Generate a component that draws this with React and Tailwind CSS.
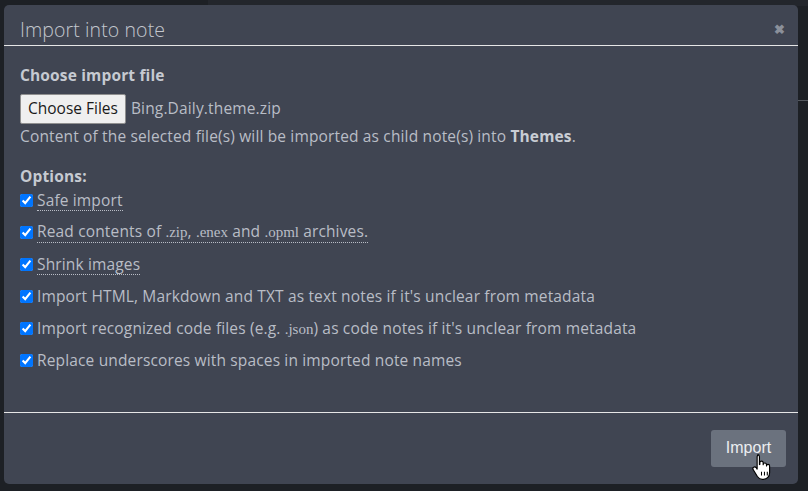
import React from "react";

const code = "font-['Liberation_Serif',serif] text-[15px] tracking-normal";

const options = [
  { label: "Safe import", tip: true },
  {
    label: (
      <>
        Read contents of <code className={code}>.zip</code>,{" "}
        <code className={code}>.enex</code> and{" "}
        <code className={code}>.opml</code> archives.
      </>
    ),
    tip: true,
  },
  { label: "Shrink images", tip: true },
  { label: "Import HTML, Markdown and TXT as text notes if it's unclear from metadata" },
  {
    label: (
      <>
        Import recognized code files (e.g. <code className={code}>.json</code>) as
        code notes if it's unclear from metadata
      </>
    ),
  },
  { label: "Replace underscores with spaces in imported note names" },
];

function HandCursor() {
  return (
    <svg
      className="absolute left-[40px] top-[23px]"
      width="21"
      height="27"
      viewBox="0 0 16 21"
    >
      <path
        d="M5 1.5c.8 0 1.4.6 1.4 1.4V9l.3-.1V7.6c0-.8.6-1.3 1.3-1.3s1.3.6 1.3 1.3v1.5c0-.8.6-1.3 1.3-1.3s1.3.6 1.3 1.3v1c0-.7.6-1.2 1.2-1.2.7 0 1.2.6 1.2 1.3v5.2c0 2.9-2 5.1-4.8 5.1H8.6c-1.7 0-2.8-.8-3.8-2.2L1.6 13c-.5-.8-.3-1.6.3-2 .7-.4 1.5-.2 2 .5l.7 1V2.9c0-.8.6-1.4 1.4-1.4z"
        fill="#fff"
        stroke="#000"
        strokeWidth="0.9"
        strokeLinejoin="round"
      />
      <path d="M8 14.5v3M10.3 14.5v3M12.5 14.5v3" stroke="#000" strokeWidth="0.8" />
    </svg>
  );
}

export default function App() {
  return (
    <div className="w-[808px] h-[491px] bg-[#1d2025] relative overflow-hidden font-['Open_Sans',sans-serif]">
      {/* page behind the dialog */}
      <div className="absolute left-[208px] top-0 right-0 h-[6px] bg-[#23262c]" />
      <div className="absolute right-0 top-[100px] w-[10px] h-px bg-[#55595f]" />

      <div className="absolute left-[4px] top-[5px] w-[794px] h-[479px] bg-[#404552] rounded-[5px] flex flex-col text-[#b9bdc6]">
        {/* header */}
        <div className="h-[41px] flex items-end justify-between pl-4 pr-[13px] pb-[1px] border-b border-[#e6e6e6]">
          <h5 className="text-[19.5px] font-light text-[#c3c7ce] tracking-[0.1px]">
            Import into note
          </h5>
          <button className="text-[#8b909a] text-[13px] font-bold leading-none mb-[8px]">✖</button>
        </div>

        {/* body */}
        <div className="flex-1 px-4 pt-[19px] text-[15.5px] tracking-[0.15px]">
          <div className="font-bold text-[#c6cad1] leading-5">Choose import file</div>
          <div className="flex items-center mt-[9px] h-[30px]">
            <span className="h-[30px] px-[7px] flex items-center bg-[#efefef] border border-[#8f8f8f] rounded-[2px] text-[#1a1a1a] text-[15.5px] tracking-normal">
              Choose Files
            </span>
            <span className="ml-[5px]">Bing.Daily.theme.zip</span>
          </div>
          <div className="leading-5 mt-[2px]">
            Content of the selected file(s) will be imported as child note(s) into{" "}
            <strong className="text-[#c9cdd4]">Themes</strong>.
          </div>

          <div className="font-bold text-[#c6cad1] leading-5 mt-[20px]">Options:</div>
          <div className="flex flex-col -mt-[2px]">
            {options.map((o, i) => (
              <label key={i} className="flex items-center h-[32px]">
                <input
                  type="checkbox"
                  defaultChecked
                  className="w-[13px] h-[13px] ml-0 mr-[4px] accent-[#0075ff]"
                />
                <span
                  className={
                    o.tip
                      ? "border-b border-dotted border-[#b9bdc6] leading-[20px]"
                      : "leading-[20px]"
                  }
                >
                  {o.label}
                </span>
              </label>
            ))}
          </div>
        </div>

        {/* footer */}
        <div className="h-[72px] border-t border-[#e6e6e6] flex items-center justify-end pr-[12px] pb-[1px]">
          <button className="relative w-[75px] h-[37px] bg-[#6b727e] rounded-[3px] text-[#eceef1] text-[16px] font-['Liberation_Sans',sans-serif] pb-[1px]">
            Import
            <HandCursor />
          </button>
        </div>
      </div>
    </div>
  );
}
